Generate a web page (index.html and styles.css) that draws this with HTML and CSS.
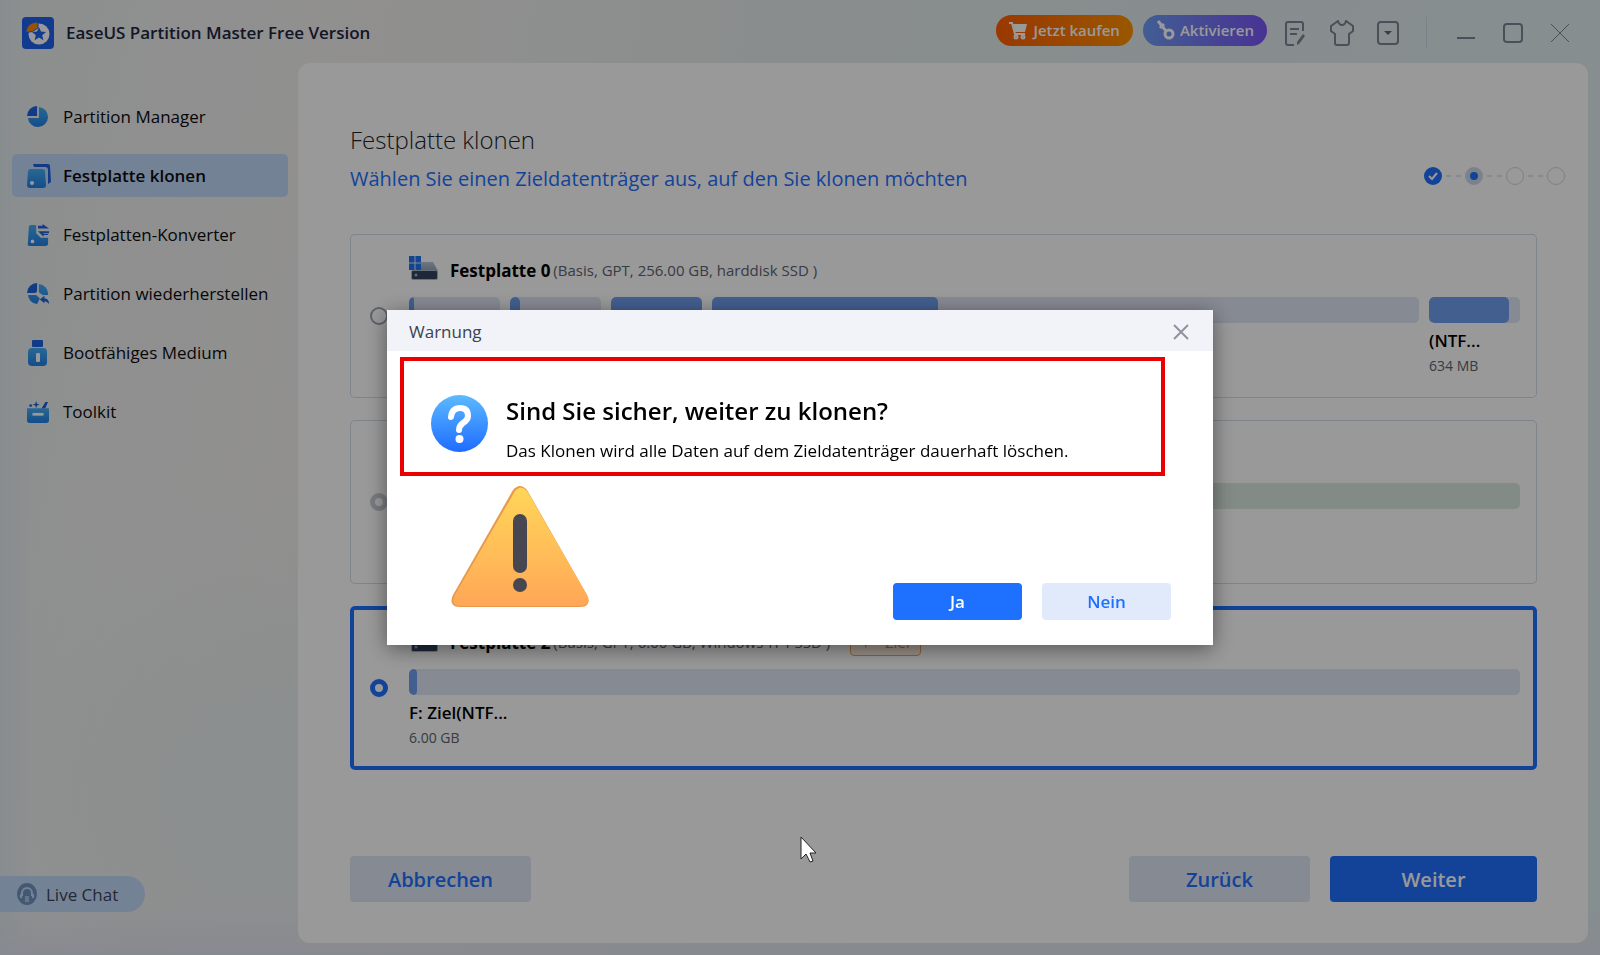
FILE: index.html
```html
<!DOCTYPE html>
<html lang="de">
<head>
  <meta charset="UTF-8" />
  <meta name="viewport" content="width=device-width, initial-scale=1.0" />
  <title>EaseUS Partition Master Free Version</title>
  <link rel="stylesheet" href="styles.css">
</head>
<body>
  <!-- shared shapes -->
  <svg class="defs" width="0" height="0" aria-hidden="true">
    <defs>
      <linearGradient id="lightBlue" x1="0" y1="0" x2="0" y2="1">
        <stop offset="0" stop-color="#45aef5" />
        <stop offset="1" stop-color="#2080e8" />
      </linearGradient>
      <linearGradient id="questionFill" x1="0" y1="0" x2="0" y2="1">
        <stop offset="0" stop-color="#5cbaff" />
        <stop offset="1" stop-color="#1f6cff" />
      </linearGradient>
      <linearGradient id="warnFill" x1="0" y1="0" x2="0" y2="1">
        <stop offset="0" stop-color="#ffd558" />
        <stop offset="0.6" stop-color="#ffbb58" />
        <stop offset="1" stop-color="#ffa656" />
      </linearGradient>
      <linearGradient id="diskTop" x1="0" y1="0" x2="0" y2="1">
        <stop offset="0" stop-color="#b9c6d6" />
        <stop offset="1" stop-color="#8fa2b8" />
      </linearGradient>
      <symbol id="disk" viewBox="0 0 30 25">
        <path d="M6 6h18l5 9H3z" fill="url(#diskTop)" />
        <rect x="2" y="14" width="27" height="10" rx="2" fill="#aebccc" />
        <rect x="3" y="15" width="25" height="8" rx="1" fill="#35445e" />
        <circle cx="7" cy="19" r="1.5" fill="#9fb2cc" />
      </symbol>
    </defs>
  </svg>

  <div class="app">
    <header class="titlebar">
      <svg class="logo" width="32" height="32" viewBox="0 0 32 32">
        <rect width="32" height="32" rx="4" fill="#1f62ee" />
        <circle cx="17" cy="17" r="10.500" fill="#fff" />
        <path d="M17 10l2 4.500 5 .5-3.800 3.300 1.200 4.900-4.400-2.700-4.400 2.700 1.200-4.900L10 15l5-.5z" fill="#1f62ee" />
        <path d="M4 15.500C4 9 9 5 16 5v6l-5.500 3.500z" fill="#ff8a00" stroke="#1f62ee" />
      </svg>
      <h1>EaseUS Partition Master Free Version</h1>
      <div class="pills">
        <button class="pill buy">
          <svg width="19" height="19" viewBox="0 0 19 19" fill="none" stroke="#fff" stroke-width="2">
            <path d="M0 2h3l3 11h10" />
            <path d="M4 3h14l-2 8H6z" fill="#fff" stroke="none" />
            <circle cx="7" cy="16" r="1.500" /><circle cx="14" cy="16" r="1.500" />
          </svg>
          Jetzt kaufen
        </button>
        <button class="pill activate">
          <svg width="19" height="20" viewBox="0 0 19 20" fill="none" stroke="#fff" stroke-width="3">
            <circle cx="13" cy="14" r="4" />
            <path d="M10 11L2 1M4 8l4-4" />
          </svg>
          Aktivieren
        </button>
      </div>
      <div class="tools">
        <button aria-label="Feedback">
          <svg width="22" height="26" viewBox="0 0 22 26">
            <path d="M18 11V4a2 2 0 0 0-2-2H3a2 2 0 0 0-2 2v19a2 2 0 0 0 2 2h6M5 9h9M5 14h7" />
            <path d="M20 16l-6 8-2 1 0-3 6-8z" fill="#7c8494" stroke="none" />
          </svg>
        </button>
        <button aria-label="Design">
          <svg width="24" height="26" viewBox="0 0 24 26">
            <path d="M8 1L1 6v5l4 3v9q0 2 2 2h10q2 0 2-2v-9l4-3V6l-7-5q-1 4-4 4T8 1z" />
          </svg>
        </button>
        <button aria-label="Menü">
          <svg width="22" height="26" viewBox="0 0 22 26">
            <rect x="1" y="2" width="20" height="22" rx="3" />
            <path d="M7 11h8l-4 4z" fill="#5d6675" stroke="none" />
          </svg>
        </button>
      </div>
      <div class="window-buttons">
        <button aria-label="Minimieren">
          <svg width="20" height="20" viewBox="0 0 20 20"><path d="M1 15h18" /></svg>
        </button>
        <button aria-label="Maximieren">
          <svg width="20" height="20" viewBox="0 0 20 20"><rect x="1" y="1" width="18" height="18" rx="3" /></svg>
        </button>
        <button aria-label="Schließen">
          <svg width="20" height="20" viewBox="0 0 20 20"><path d="M1 1l18 18M19 1L1 19" /></svg>
        </button>
      </div>
    </header>

    <div class="main">
      <aside class="sidebar">
        <nav>
          <a href="#">
            <svg width="22" height="22" viewBox="0 0 24 24">
              <path d="M13 1a11 11 0 1 1-12 12h12z" fill="url(#lightBlue)" />
              <path d="M11 0v11H0A11 11 0 0 1 11 0z" fill="#1f62e0" />
            </svg>
            Partition Manager
          </a>
          <a href="#" class="active">
            <svg width="24" height="24" viewBox="0 0 24 24">
              <path d="M6 0h15q2 0 2 2l1 16-3 2V6q0-3-3-3H7z" fill="#1f62e0" />
              <path d="M4 5h11q3 0 3 3l1 13q0 3-3 3H3q-3 0-3-3L1 8q0-3 3-3z" fill="url(#lightBlue)" />
              <circle cx="5" cy="19" r="2" fill="#fff" />
            </svg>
            Festplatte klonen
          </a>
          <a href="#">
            <svg width="22" height="24" viewBox="0 0 24 24">
              <path d="M4 1h6v9l5 5h8v6q0 3-3 3H3q-3 0-2-3L2 3q0-2 2-2z" fill="url(#lightBlue)" />
              <circle cx="6" cy="19" r="2" fill="#fff" />
              <path d="M12 2h5V0l7 5H12zM23 12h-5v2l-6-6h12v2h-6v1h5z" fill="#1f62e0" />
            </svg>
            Festplatten-Konverter
          </a>
          <a href="#">
            <svg width="22" height="22" viewBox="0 0 24 24">
              <path d="M13 1a11 11 0 0 1 10 12h-6l-4-3zM1 13h9l4 4-3 6A11 11 0 0 1 1 13z" fill="url(#lightBlue)" />
              <path d="M11 0v8q0 3-3 3H0A11 11 0 0 1 11 0zM14 18l5-4v3q5 0 5 6-2-3-5-3v2z" fill="#1f62e0" />
            </svg>
            Partition wiederherstellen
          </a>
          <a href="#">
            <svg width="22" height="26" viewBox="0 0 22 26">
              <rect x="5" y="0" width="11" height="7" rx="1" fill="#1f62e0" />
              <rect x="1" y="8" width="19" height="18" rx="4" fill="url(#lightBlue)" />
              <rect x="9" y="13" width="4" height="9" rx="1" fill="#fff" />
            </svg>
            Bootfähiges Medium
          </a>
          <a href="#">
            <svg width="22" height="24" viewBox="0 0 24 24">
              <path d="M0 8h24v13q0 3-3 3H3q-3 0-3-3z" fill="url(#lightBlue)" />
              <rect x="6" y="13" width="12" height="3" fill="#fff" />
              <path d="M16 8l4-7h3l-3 7zM10 0l1 3 3 1-3 1-1 3-1-3-3-1 3-1z" fill="#1f62e0" />
              <circle cx="4" cy="5" r="1.500" fill="#1f62e0" />
            </svg>
            Toolkit
          </a>
        </nav>
        <button class="live-chat">
          <svg width="20" height="22" viewBox="0 0 20 22">
            <ellipse cx="10" cy="11" rx="10" ry="11" fill="#7193be" />
            <path d="M5 13v-3a5 5 0 0 1 10 0v3M4 11v4M16 11v4" fill="none" stroke="#c1d9f8" stroke-width="2" />
            <circle cx="10" cy="10" r="3" fill="#7193be" />
            <path d="M8 13h4v6H8z" fill="#a9c4e6" />
          </svg>
          Live Chat
        </button>
      </aside>

      <main class="panel">
        <div class="panel-head">
          <div>
            <h2>Festplatte klonen</h2>
            <p>Wählen Sie einen Zieldatenträger aus, auf den Sie klonen möchten</p>
          </div>
          <div class="steps">
            <span class="step done">
              <svg width="12" height="12" viewBox="0 0 12 12"><path d="M2 6l3 3 5-6" /></svg>
            </span>
            <span class="line"></span>
            <span class="step current"></span>
            <span class="line"></span>
            <span class="step"></span>
            <span class="line"></span>
            <span class="step"></span>
          </div>
        </div>

        <div class="disks">
          <div class="disk">
            <input type="radio" name="disk" id="disk0">
            <div class="disk-body">
              <label for="disk0" class="disk-title">
                <svg width="30" height="28" viewBox="0 0 30 28">
                  <use href="#disk" width="30" height="25" />
                  <path d="M0 0h12v14H0z" fill="#2274f0" />
                  <path d="M6 0v14M0 7h12" stroke="#dce9ff" />
                </svg>
                <strong>Festplatte 0</strong>
                <span>(Basis, GPT, 256.00 GB, harddisk SSD )</span>
              </label>
              <div class="partitions">
                <div class="part small"><div class="bar"><i style="width: 5%"></i></div></div>
                <div class="part small"><div class="bar"><i style="width: 11%"></i></div></div>
                <div class="part small"><div class="bar"><i style="width: 100%"></i></div></div>
                <div class="part"><div class="bar"><i style="width: 32%"></i></div></div>
                <div class="part small">
                  <div class="bar"><i style="width: 88%"></i></div>
                  <b>(NTF...</b>
                  <small>634 MB</small>
                </div>
              </div>
            </div>
          </div>

          <div class="disk">
            <input type="radio" name="disk" id="disk1" aria-label="Festplatte 1" disabled>
            <div class="disk-body">
              <div class="disk-title"></div>
              <div class="partitions">
                <div class="part"><div class="bar source"></div></div>
              </div>
            </div>
          </div>

          <div class="disk selected">
            <input type="radio" name="disk" id="disk2" checked>
            <div class="disk-body">
              <label for="disk2" class="disk-title">
                <svg width="30" height="28" viewBox="0 0 30 28"><use href="#disk" width="30" height="25" /></svg>
                <strong>Festplatte 2</strong>
                <span>(Basis, GPT, 6.00 GB, Windows-IT-PSSD )</span>
                <em class="tag">
                  <svg width="10" height="14" viewBox="0 0 10 14"><path d="M5 14L3 7H0l2-6h6l2 6H6z" fill="#f58220" /></svg>
                  Ziel
                </em>
              </label>
              <div class="partitions">
                <div class="part">
                  <div class="bar"><i style="width: 8px"></i></div>
                  <b>F: Ziel(NTF...</b>
                  <small>6.00 GB</small>
                </div>
              </div>
            </div>
          </div>
        </div>

        <div class="actions">
          <button class="btn">Abbrechen</button>
          <button class="btn back">Zurück</button>
          <button class="btn primary next">Weiter</button>
        </div>
      </main>
    </div>
  </div>

  <div class="overlay">
    <div class="dialog" role="dialog" aria-labelledby="dialogTitle">
      <div class="dialog-head">
        <span id="dialogTitle">Warnung</span>
        <button aria-label="Schließen">
          <svg width="16" height="16" viewBox="0 0 16 16"><path d="M1 1l14 14M15 1L1 15" /></svg>
        </button>
      </div>
      <div class="highlight">
        <svg width="57" height="57" viewBox="0 0 57 57">
          <circle cx="28.500" cy="28.500" r="28.500" fill="url(#questionFill)" />
          <path d="M20 22q1-9 9-9 8 0 8 8 0 4-5 7-4 3-4 7" fill="none" stroke="#fff" stroke-width="6" stroke-linecap="round" />
          <circle cx="28.500" cy="44" r="4" fill="#fff" />
        </svg>
        <div>
          <h3>Sind Sie sicher, weiter zu klonen?</h3>
          <p>Das Klonen wird alle Daten auf dem Zieldatenträger dauerhaft löschen.</p>
        </div>
      </div>
      <div class="dialog-foot">
        <svg class="warning" width="138" height="121" viewBox="0 0 138 121">
          <path d="M62 4q7-8 14 0l60 105q5 11-6 12H8q-11-1-6-12z" fill="#e89a4c" />
          <path d="M64 5q6-7 12 0l60 104q5 10-6 11H9q-10-1-5-11z" fill="url(#warnFill)" />
          <rect x="62" y="28" width="14" height="59" rx="7" fill="#484650" />
          <circle cx="69" cy="99" r="7" fill="#484650" />
        </svg>
        <div class="dialog-buttons">
          <button class="yes">Ja</button>
          <button class="no">Nein</button>
        </div>
      </div>
    </div>
  </div>

  <svg class="cursor" width="18" height="27" viewBox="0 0 18 27">
    <path d="M1 1v22l5-5 4 8 3-1-3-8h6z" fill="#fff" stroke="#222" />
  </svg>
</body>
</html>
```

FILE: styles.css
```css
:root {
  --blue: #1e70ff;
  --pale: #e0e6f4;
  --bar: #e0e6f4;
  --used: #709ff0;
  --line: #d3dce8;
}
* {
  box-sizing: border-box;
}
body {
  margin: 0;
  font-family: 'Segoe UI', 'Open Sans', sans-serif;
  font-size: 17px;
  color: #000;
}
h1, h2, h3, p {
  margin: 0;
}
button {
  font: inherit;
  border: none;
  background: none;
  padding: 0;
  cursor: pointer;
}
svg {
  flex: none;
  display: block;
}
.defs {
  position: absolute;
}
.app {
  min-height: 100vh;
  display: flex;
  flex-direction: column;
  background:
    linear-gradient(to top, #e2e6f0 0, rgba(226, 230, 240, 0) 50px),
    linear-gradient(to right, #e2ebef 0, rgba(226, 235, 239, 0) 30px),
    radial-gradient(ellipse 260px 320px at 240px 800px, #e8eeef, rgba(232, 238, 239, 0)),
    linear-gradient(100deg, #eaefef 0%, #f2f0ee 18%, #e4ebec 50%, #dfeef0 100%);
}

/* title bar */
.titlebar {
  height: 63px;
  display: flex;
  align-items: center;
  padding: 2px 30px 0 22px;
}
h1 {
  margin-left: 12px;
  font-size: 17px;
  font-weight: 600;
  color: #1d2740;
}
.pills {
  margin-left: auto;
  display: flex;
  gap: 10px;
  padding-bottom: 5px;
}
.pill {
  height: 31px;
  padding: 0 13px;
  border-radius: 16px;
  display: flex;
  align-items: center;
  gap: 5px;
  color: #fff;
  font-size: 15px;
  font-weight: 600;
}
.buy {
  background: linear-gradient(to right, #ff5e00, #ff9100);
}
.activate {
  background: linear-gradient(to right, #6f9cf5, #7a55f5);
}
.tools, .window-buttons {
  display: flex;
  align-items: center;
}
.tools {
  gap: 23px;
  margin-left: 18px;
  padding-right: 27px;
  height: 31px;
  border-right: 1px solid #cdd5e4;
}
.window-buttons {
  gap: 27px;
  margin-left: 29px;
}
.tools svg, .window-buttons svg {
  fill: none;
  stroke: #7c8494;
  stroke-width: 2;
}
.window-buttons path[d^="M1 1l"] {
  stroke-width: 1;
}

/* sidebar */
.main {
  flex: 1;
  display: flex;
  padding: 0 12px 12px 0;
}
.sidebar {
  width: 298px;
  flex: none;
  display: flex;
  flex-direction: column;
  justify-content: space-between;
  align-items: flex-start;
  padding: 32px 10px 31px 0;
}
nav {
  align-self: stretch;
  display: flex;
  flex-direction: column;
  gap: 16px;
  padding-left: 12px;
}
nav a {
  height: 43px;
  display: flex;
  align-items: center;
  gap: 14px;
  padding-left: 15px;
  border-radius: 5px;
  color: #0c0c10;
  text-decoration: none;
}
nav a.active {
  gap: 12px;
  background: #c1d9fa;
  font-weight: 600;
}
.live-chat {
  height: 36px;
  display: flex;
  align-items: center;
  gap: 9px;
  padding: 0 27px 0 17px;
  border-radius: 0 18px 18px 0;
  background: #c1d9f8;
  color: #3a4458;
}

/* content */
.panel {
  flex: 1;
  min-width: 0;
  display: flex;
  flex-direction: column;
  padding: 56px 51px 41px 52px;
  border-radius: 12px;
  background: #fff;
}
.panel-head {
  display: flex;
  justify-content: space-between;
  align-items: flex-end;
}
h2 {
  font-size: 24px;
  line-height: 42px;
  font-weight: 300;
  color: #20242c;
}
.panel-head p {
  font-size: 20px;
  line-height: 36px;
  color: var(--blue);
}
.steps {
  display: flex;
  align-items: center;
  margin: 0 -28px 12px 0;
}
.step {
  width: 18px;
  height: 18px;
  border-radius: 50%;
  border: 1px solid #cfd6e0;
  display: flex;
  align-items: center;
  justify-content: center;
}
.step.done {
  border: none;
  background: var(--blue);
}
.step.done path {
  fill: none;
  stroke: #fff;
  stroke-width: 2;
}
.step.current {
  border: 5px solid #cfd9ea;
  background: var(--blue);
}
/* two short dashes between the steps */
.line {
  width: 15px;
  height: 2px;
  margin: 0 4px;
  background: linear-gradient(to right, #dfe4ec 5px, transparent 5px, transparent 10px, #dfe4ec 10px);
}
.disks {
  display: flex;
  flex-direction: column;
  gap: 22px;
  margin-top: 37px;
}
.disk {
  height: 164px;
  display: flex;
  align-items: center;
  padding: 0 17px 0 20px;
  border-radius: 5px;
  box-shadow: inset 0 0 0 1px var(--line);
}
.disk.selected {
  box-shadow: inset 0 0 0 4px var(--blue);
}
.disk input {
  appearance: none;
  width: 18px;
  height: 18px;
  margin: 0;
  border: 2px solid #9aa3b0;
  border-radius: 50%;
}
.disk input:disabled {
  border: 5px solid #c6ccd6;
}
.disk input:checked {
  border: 5px solid var(--blue);
}
.disk-body {
  flex: 1;
  align-self: stretch;
  margin-left: 21px;
  padding-top: 22px;
}
.disk-title {
  height: 28px;
  display: flex;
  align-items: center;
}
.disk-title strong {
  margin: 0 3px 0 11px;
  font-weight: 700;
}
.disk-title span {
  font-size: 15px;
  color: #5d6370;
}
.tag {
  height: 28px;
  display: flex;
  align-items: center;
  gap: 14px;
  margin-left: 20px;
  padding: 0 10px;
  border: 1px solid #f5a04a;
  border-radius: 4px;
  background: #fff0e0;
  color: #f58220;
  font-size: 15px;
  font-style: normal;
}
.partitions {
  display: flex;
  gap: 10px;
  margin-top: 13px;
}
.part {
  flex: 1;
}
.part.small {
  flex: 0 0 91px;
}
.bar {
  height: 26px;
  border-radius: 5px;
  overflow: hidden;
  background: var(--bar);
}
.bar i {
  display: block;
  height: 100%;
  border-radius: 5px;
  background: var(--used);
}
.bar.source {
  background: #dbe8e0;
}
.part b, .part small {
  display: block;
  white-space: nowrap;
}
.part b {
  margin-top: 5px;
  line-height: 26px;
  font-weight: 600;
}
.part small {
  font-size: 14px;
  line-height: 24px;
  color: #5d6370;
}
.actions {
  display: flex;
  gap: 20px;
  margin-top: auto;
}
.btn {
  width: 181px;
  height: 46px;
  border-radius: 4px;
  background: var(--pale);
  color: var(--blue);
  font-size: 20px;
  font-weight: 600;
}
.btn.back {
  margin-left: auto;
}
.btn.primary {
  background: var(--blue);
  color: #fff;
}
.btn.next {
  width: 207px;
}

/* dialog */
.overlay {
  position: fixed;
  inset: 0;
  display: flex;
  align-items: center;
  justify-content: center;
  background: rgba(0, 0, 0, 0.4);
}
.dialog {
  width: 826px;
  max-width: 96%;
  background: #fff;
  box-shadow: 0 4px 20px rgba(0, 0, 0, 0.45);
}
.dialog-head {
  height: 41px;
  display: flex;
  align-items: center;
  justify-content: space-between;
  padding: 2px 24px 0 22px;
  background: #f2f3f8;
  color: #3c4250;
}
.dialog-head svg {
  stroke: #8d949f;
  stroke-width: 2;
}
.highlight {
  margin: 6px 48px 0 13px;
  height: 119px;
  display: flex;
  gap: 18px;
  padding: 34px 0 0 27px;
  border: 4px solid #ea0000;
}
.highlight div {
  margin-top: -3px;
}
h3 {
  font-size: 24px;
  line-height: 38px;
  font-weight: 600;
}
.highlight p {
  line-height: 42px;
}
.dialog-foot {
  display: flex;
  justify-content: space-between;
  align-items: flex-start;
  padding: 10px 42px 25px 64px;
}
.dialog-buttons {
  display: flex;
  gap: 20px;
  padding-top: 97px;
}
.dialog-buttons button {
  width: 129px;
  height: 37px;
  border-radius: 4px;
  font-weight: 600;
}
.yes {
  background: var(--blue);
  color: #fff;
}
.no {
  background: #e0eafb;
  color: var(--blue);
}
.cursor {
  position: fixed;
  left: 50%;
  top: 836px;
}
```
